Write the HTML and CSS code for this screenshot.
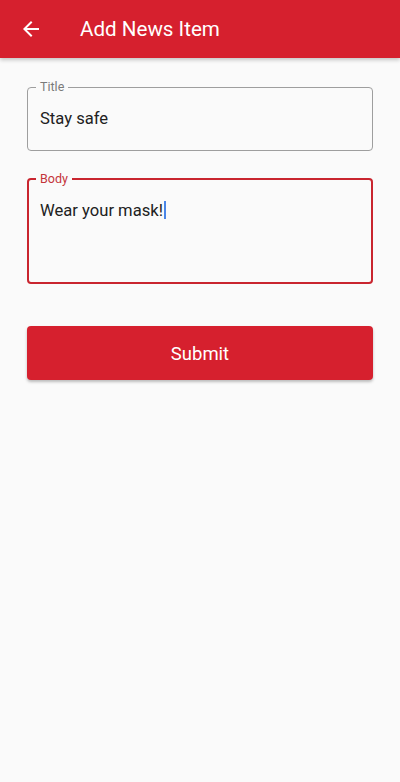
FILE: index.html
```html
<!DOCTYPE html>
<html>
<head>
<meta charset="utf-8">
<link rel="stylesheet" href="styles.css">
</head>
<body>
<header class="appbar">
  <svg class="back" viewBox="0 0 24 24" width="24" height="24"><path fill="#fff" d="M20 11H7.83l5.59-5.59L12 4l-8 8 8 8 1.41-1.41L7.83 13H20v-2z"/></svg>
  <h1 class="title">Add News Item</h1>
</header>
<main class="content">
  <fieldset class="field">
    <legend class="label">Title</legend>
    <div class="value">Stay safe</div>
  </fieldset>
  <fieldset class="field field-focus">
    <legend class="label">Body</legend>
    <div class="value value-multi">Wear your mask!<span class="caret"></span></div>
  </fieldset>
  <button class="submit">Submit</button>
</main>
</body>
</html>
```
FILE: styles.css
```css
html, body {
  margin: 0;
  padding: 0;
}
body {
  background: #fafafa;
  font-family: Roboto, "Liberation Sans", sans-serif;
  width: 400px;
  height: 782px;
}
.appbar {
  height: 58px;
  background: #d6202e;
  display: flex;
  align-items: center;
  box-shadow: 0 2px 4px rgba(0,0,0,0.22);
}
.back {
  margin-left: 19px;
  flex: none;
}
.title {
  margin: 0 0 0 37px;
  font-size: 20.6px;
  font-weight: 400;
  color: #fff;
  line-height: 24px;
}
.content {
  padding: 22px 27px 0;
  display: flex;
  flex-direction: column;
}
.field {
  margin: 0;
  border: 1px solid #9e9e9e;
  border-radius: 4px;
  padding: 0 12px;
  min-inline-size: 0;
}
.label {
  font-size: 12.5px;
  line-height: 14px;
  padding: 0 4px;
  margin-left: -4px;
  color: #7a7a7a;
}
.value {
  font-size: 16.6px;
  line-height: 20px;
  color: #212121;
  padding: 15px 0 21px;
}
.field-focus {
  margin-top: 21px;
  border: 2px solid #c9252f;
  padding: 0 11px;
}
.field-focus .label {
  color: #c4343b;
}
.value-multi {
  padding: 15px 0 61px;
}
.caret {
  display: inline-block;
  width: 2px;
  height: 18px;
  background: #4a86e8;
  vertical-align: -3px;
  margin-left: 1px;
}
.submit {
  margin-top: 42px;
  height: 54px;
  padding: 2px 0 0;
  border: none;
  border-radius: 4px;
  background: #d6202e;
  color: #fff;
  font-family: Roboto, "Liberation Sans", sans-serif;
  font-size: 18.5px;
  box-shadow: 0 2px 3px rgba(0,0,0,0.25);
}
```
